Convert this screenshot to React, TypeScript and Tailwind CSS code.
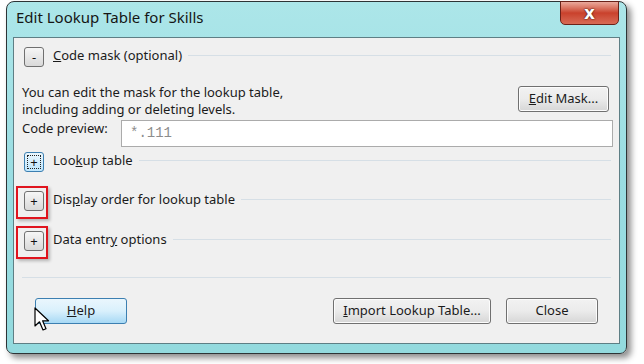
import React from 'react';

const font = { fontFamily: '"Noto Sans", "Open Sans", sans-serif' };

function ToggleBox({ sign, focused }: { sign: string; focused?: boolean }) {
  if (focused) {
    return (
      <div className="flex h-[20px] w-[20px] shrink-0 items-center justify-center rounded-[3px] border border-[#3c7fb1] bg-gradient-to-b from-[#eaf6fd] to-[#bee6fd] p-[2px]">
        <div className="flex h-full w-full items-center justify-center border border-dotted border-[#222] text-[13px] leading-none text-[#111]">
          {sign}
        </div>
      </div>
    );
  }
  return (
    <div className="flex h-[20px] w-[20px] shrink-0 items-center justify-center rounded-[3px] border border-[#707070] bg-gradient-to-b from-[#f6f6f6] to-[#d9d9d9] text-[13px] leading-none text-[#111]">
      {sign}
    </div>
  );
}

function SectionRow({ sign, label, focused, marked }: { sign: string; label: React.ReactNode; focused?: boolean; marked?: boolean }) {
  return (
    <div className="flex h-[20px] items-center pl-[10px] pr-[8px]">
      <div className="relative">
        <ToggleBox sign={sign} focused={focused} />
        {marked && (
          <div className="absolute -left-[8px] -top-[5px] h-[33px] w-[32px] border-2 border-[#e0141e] shadow-[2px_2px_3px_rgba(0,0,0,0.25)]" />
        )}
      </div>
      <span className="ml-[9px] -mt-[3px] whitespace-nowrap text-[13px] text-[#1b1b1b]">{label}</span>
      <div className="ml-[6px] -mt-[3px] h-px flex-1 bg-[#d6dfe6]" />
    </div>
  );
}

function Btn({ children, w, hover }: { children: React.ReactNode; w: string; hover?: boolean }) {
  const base = 'flex h-[26px] items-center justify-center rounded-[3px] border text-[13px] text-[#1b1b1b] ' + w;
  return hover ? (
    <div className={base + ' border-[#3c7fb1] bg-gradient-to-b from-[#eaf6fd] via-[#d9f0fc] to-[#a7d9f5]'}>{children}</div>
  ) : (
    <div className={base + ' border-[#707070] bg-gradient-to-b from-[#f2f2f2] via-[#ebebeb] to-[#d6d6d6] shadow-[inset_0_0_0_1px_#fcfcfc]'}>{children}</div>
  );
}

export default function App() {
  return (
    <div className="h-[364px] w-[644px] overflow-hidden bg-white" style={font}>
      <div className="relative ml-[6px] mt-[1px] h-[353px] w-[621px] rounded-t-[8px] rounded-b-[7px] border border-[#2d3436] bg-gradient-to-b from-[#ace6e9] via-[#9adde2] to-[#93dade] shadow-[4px_4px_6px_rgba(0,0,0,0.45)]">
        {/* title bar */}
        <div className="flex h-[35px] items-center pl-[9px] pb-[4px] text-[15px] text-[#151515]">
          Edit Lookup Table for Skills
        </div>
        {/* close button */}
        <div className="absolute right-[7px] top-[-1px] flex h-[24px] w-[59px] items-center justify-center rounded-b-[5px] border border-[#6b2219] bg-gradient-to-b from-[#e9a99c] via-[#c9412c] to-[#d86a55]">
          <span className="text-[17px] font-bold leading-none text-white" style={{ fontFamily: '"DejaVu Sans", sans-serif', textShadow: '0 0 2px #4a1610, 0 0 1px #4a1610' }}>
            x
          </span>
        </div>
        {/* client area */}
        <div className="mx-[6px] flex h-[307px] flex-col border border-[#5e7f85] bg-[#f0f0f0] pt-[9px]">
          <SectionRow sign="-" label={<><u>C</u>ode mask (optional)</>} />

          <div className="mt-[17px] flex h-[34px] items-start pl-[8px] pr-[10px]">
            <div className="text-[13px] leading-[17px] text-[#1b1b1b]">
              You can edit the mask for the lookup table,
              <br />
              including adding or deleting levels.
            </div>
            <div className="flex-1" />
            <div className="mt-[2px]">
              <Btn w="w-[91px]">
                <u>E</u>dit Mask...
              </Btn>
            </div>
          </div>

          <div className="mt-[2px] flex h-[27px] items-center pl-[8px] pr-[6px]">
            <span className="w-[99px] -mt-[9px] text-[13px] text-[#1b1b1b]">Code preview:</span>
            <div className="flex h-[27px] flex-1 items-center border border-[#ababab] bg-white pl-[8px] text-[14px] text-[#8c8c8c]" style={{ fontFamily: '"Liberation Mono", monospace' }}>
              *.111
            </div>
          </div>

          <div className="mt-[5px]">
            <SectionRow sign="+" focused label={<>Loo<u>k</u>up table</>} />
          </div>
          <div className="mt-[19px]">
            <SectionRow sign="+" marked label={<>Dis<u>p</u>lay order for lookup table</>} />
          </div>
          <div className="mt-[20px]">
            <SectionRow sign="+" marked label={<>Data entr<u>y</u> options</>} />
          </div>

          <div className="mx-[8px] mt-[26px] h-px bg-[#d6dfe6]" />

          <div className="mt-[20px] flex items-center pl-[21px] pr-[21px]">
            <div className="relative">
              <Btn w="w-[92px]" hover>
                <u>H</u>elp
              </Btn>
              <svg className="absolute left-[-1px] top-[9px]" width="18" height="26" viewBox="0 0 18 26">
                <path d="M1 1 L1 19 L5.5 14.8 L9 23 L12 21.7 L8.6 13.8 L14.5 13.8 Z" fill="#fff" stroke="#000" strokeWidth="1.2" strokeLinejoin="round" />
              </svg>
            </div>
            <div className="flex-1" />
            <Btn w="w-[158px]">
              <u>I</u>mport Lookup Table...
            </Btn>
            <div className="ml-[15px]">
              <Btn w="w-[92px]">Close</Btn>
            </div>
          </div>
        </div>
      </div>
    </div>
  );
}
